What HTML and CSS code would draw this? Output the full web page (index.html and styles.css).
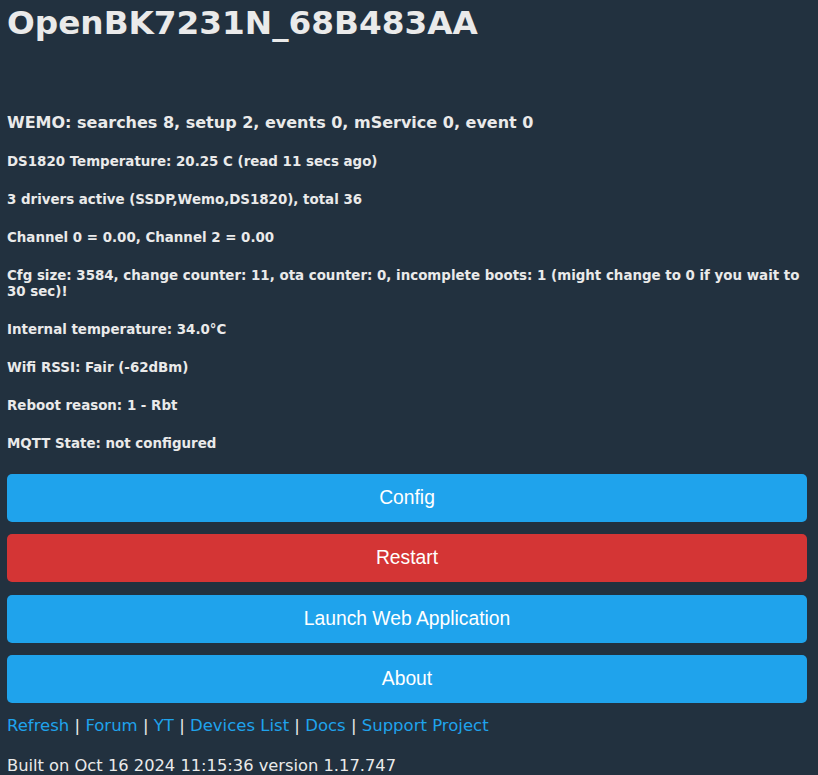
FILE: index.html
```html
<!DOCTYPE html>
<html lang="en">
<head>
  <meta charset="UTF-8" />
  <meta name="viewport" content="width=device-width, initial-scale=1.0" />
  <title>OpenBK7231N_68B483AA</title>
  <link rel="stylesheet" href="styles.css">
</head>
<body>
  <h1 class="title">OpenBK7231N_68B483AA</h1>

  <div class="state">
    <h4>WEMO: searches 8, setup 2, events 0, mService 0, event 0</h4>
    <h5>DS1820 Temperature: 20.25 C (read 11 secs ago)</h5>
    <h5>3 drivers active (SSDP,Wemo,DS1820), total 36</h5>
    <h5>Channel 0 = 0.00, Channel 2 = 0.00</h5>
    <h5>Cfg size: 3584, change counter: 11, ota counter: 0, incomplete boots: 1 (might change to 0 if you wait to 30 sec)!</h5>
    <h5>Internal temperature: 34.0°C</h5>
    <h5>Wifi RSSI: Fair (-62dBm)</h5>
    <h5>Reboot reason: 1 - Rbt</h5>
    <h5>MQTT State: not configured</h5>
  </div>

  <div class="menu">
    <form action="cfg"><button>Config</button></form>
    <form action="reboot"><button class="bred">Restart</button></form>
    <form action="app"><button>Launch Web Application</button></form>
    <form action="about"><button>About</button></form>
  </div>

  <div class="links">
    <a href="index">Refresh</a> | <a href="#">Forum</a> | <a href="#">YT</a> | <a href="#">Devices List</a> | <a href="#">Docs</a> | <a href="#">Support Project</a>
  </div>

  <p class="built">Built on Oct 16 2024 11:15:36 version 1.17.747</p>
</body>
</html>
```

FILE: styles.css
```css
body {
  margin: 0;
  padding: 0 7px;
  width: 800px;
  font-family: "DejaVu Sans", Verdana, sans-serif;
  background: #22313f;
  color: #eaeaea;
}
.title {
  margin: 0;
  padding-top: 4px;
  font-size: 32.7px;
  line-height: 38px;
}
.state {
  padding-top: 71px;
}
.state h4 {
  margin: 0 0 22px;
  font-size: 16px;
  line-height: 19px;
}
.state h5 {
  margin: 0 0 22px;
  font-size: 13.4px;
  line-height: 16px;
}
.menu form {
  margin: 0 0 12.4px;
}
button {
  display: block;
  width: 100%;
  height: 48px;
  border: 0;
  border-radius: 5px;
  background: #1fa3ec;
  color: #fff;
  font-family: "Liberation Sans", Arial, sans-serif;
  font-size: 19.3px;
  cursor: pointer;
}
button.bred {
  background: #d43535;
}
.links {
  margin-top: 4px;
  font-size: 16.5px;
  line-height: 20px;
}
a {
  color: #1fa3ec;
  text-decoration: none;
}
.built {
  margin: 20px 0 0;
  font-size: 16.3px;
  line-height: 20px;
}
```
